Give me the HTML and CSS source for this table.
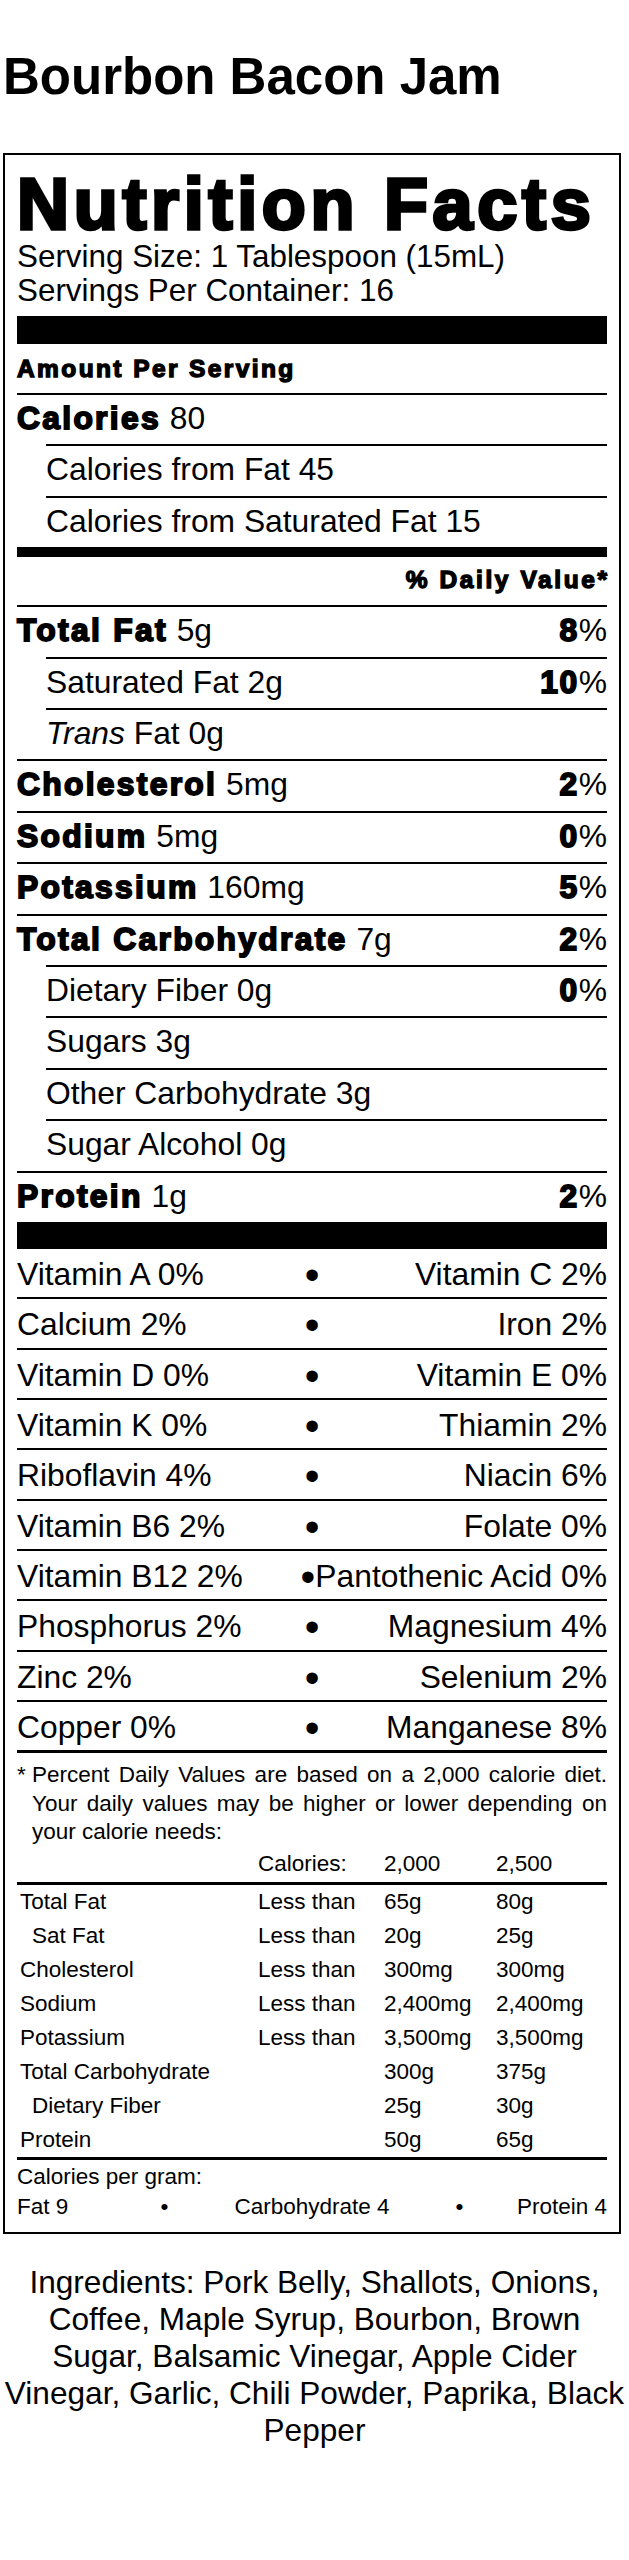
FILE: index.html
```html
<!DOCTYPE html>
<html lang="en">
<head>
<meta charset="utf-8">
<title>Bourbon Bacon Jam</title>
<link rel="stylesheet" href="styles.css">
</head>
<body>
<h1 class="title">Bourbon Bacon Jam</h1>

<section class="label">
  <h2 class="nf-title">Nutrition Facts</h2>
  <p class="serving">Serving Size: 1 Tablespoon (15mL)</p>
  <p class="serving">Servings Per Container: 16</p>
  <div class="bar bar-xl"></div>
  <div class="amount">Amount Per Serving</div>

  <div class="row"><span><b class="hv">Calories</b> 80</span></div>
  <div class="row sub"><span>Calories from Fat 45</span></div>
  <div class="row sub"><span>Calories from Saturated Fat 15</span></div>
  <div class="bar bar-md"></div>
  <div class="dv-head">% Daily Value*</div>

  <div class="row"><span><b class="hv">Total Fat</b> 5g</span><span class="pct"><b class="num">8</b>%</span></div>
  <div class="row sub"><span>Saturated Fat 2g</span><span class="pct"><b class="num">10</b>%</span></div>
  <div class="row sub"><span><i>Trans</i> Fat 0g</span></div>
  <div class="row"><span><b class="hv">Cholesterol</b> 5mg</span><span class="pct"><b class="num">2</b>%</span></div>
  <div class="row"><span><b class="hv">Sodium</b> 5mg</span><span class="pct"><b class="num">0</b>%</span></div>
  <div class="row"><span><b class="hv">Potassium</b> 160mg</span><span class="pct"><b class="num">5</b>%</span></div>
  <div class="row"><span><b class="hv">Total Carbohydrate</b> 7g</span><span class="pct"><b class="num">2</b>%</span></div>
  <div class="row sub"><span>Dietary Fiber 0g</span><span class="pct"><b class="num">0</b>%</span></div>
  <div class="row sub"><span>Sugars 3g</span></div>
  <div class="row sub"><span>Other Carbohydrate 3g</span></div>
  <div class="row sub"><span>Sugar Alcohol 0g</span></div>
  <div class="row"><span><b class="hv">Protein</b> 1g</span><span class="pct"><b class="num">2</b>%</span></div>
  <div class="bar bar-lg"></div>

  <div class="vit"><span>Vitamin A 0%</span><span class="dot">•</span><span class="vr">Vitamin C 2%</span></div>
  <div class="vit"><span>Calcium 2%</span><span class="dot">•</span><span class="vr">Iron 2%</span></div>
  <div class="vit"><span>Vitamin D 0%</span><span class="dot">•</span><span class="vr">Vitamin E 0%</span></div>
  <div class="vit"><span>Vitamin K 0%</span><span class="dot">•</span><span class="vr">Thiamin 2%</span></div>
  <div class="vit"><span>Riboflavin 4%</span><span class="dot">•</span><span class="vr">Niacin 6%</span></div>
  <div class="vit"><span>Vitamin B6 2%</span><span class="dot">•</span><span class="vr">Folate 0%</span></div>
  <div class="vit"><span>Vitamin B12 2%</span><span class="dot">•</span><span class="vr">Pantothenic Acid 0%</span></div>
  <div class="vit"><span>Phosphorus 2%</span><span class="dot">•</span><span class="vr">Magnesium 4%</span></div>
  <div class="vit"><span>Zinc 2%</span><span class="dot">•</span><span class="vr">Selenium 2%</span></div>
  <div class="vit vit-last"><span>Copper 0%</span><span class="dot">•</span><span class="vr">Manganese 8%</span></div>

  <div class="foot">
    <span class="ast">*</span>
    <p class="foot-text">Percent Daily Values are based on a 2,000 calorie diet. Your daily values may be higher or lower depending on your calorie needs:</p>
  </div>

  <div class="dvt-row dvt-head"><span></span><span>Calories:</span><span>2,000</span><span>2,500</span></div>
  <div class="dvt-row"><span>Total Fat</span><span>Less than</span><span>65g</span><span>80g</span></div>
  <div class="dvt-row"><span class="ind">Sat Fat</span><span>Less than</span><span>20g</span><span>25g</span></div>
  <div class="dvt-row"><span>Cholesterol</span><span>Less than</span><span>300mg</span><span>300mg</span></div>
  <div class="dvt-row"><span>Sodium</span><span>Less than</span><span>2,400mg</span><span>2,400mg</span></div>
  <div class="dvt-row"><span>Potassium</span><span>Less than</span><span>3,500mg</span><span>3,500mg</span></div>
  <div class="dvt-row"><span>Total Carbohydrate</span><span></span><span>300g</span><span>375g</span></div>
  <div class="dvt-row"><span class="ind">Dietary Fiber</span><span></span><span>25g</span><span>30g</span></div>
  <div class="dvt-row"><span>Protein</span><span></span><span>50g</span><span>65g</span></div>

  <div class="cpg">
    <div class="cpg-title">Calories per gram:</div>
    <div class="cpg-row">
      <span class="cpg-fat">Fat 9</span>
      <span class="cpg-b1">•</span>
      <span class="cpg-carb">Carbohydrate 4</span>
      <span class="cpg-b2">•</span>
      <span class="cpg-pro">Protein 4</span>
    </div>
  </div>
</section>

<p class="ingredients">Ingredients: Pork Belly, Shallots, Onions, Coffee, Maple Syrup, Bourbon, Brown Sugar, Balsamic Vinegar, Apple Cider Vinegar, Garlic, Chili Powder, Paprika, Black Pepper</p>
</body>
</html>
```

FILE: styles.css
```css
html, body {
  margin: 0;
  padding: 0;
  background: #fff;
  color: #000;
}

body {
  font-family: "Liberation Sans", Arial, Helvetica, sans-serif;
  width: 629px;
}

.title {
  margin: 47px 0 46px 3px;
  font-size: 51px;
  line-height: 60px;
  font-weight: 700;
}

.label {
  box-sizing: border-box;
  width: 618px;
  margin-left: 3px;
  border: 2px solid #000;
  padding: 14px 12px 10px;
  font-size: 31.8px;
}

.nf-title {
  margin: 0;
  font-size: 72px;
  line-height: 71px;
  font-weight: 700;
  letter-spacing: 4.7px;
  -webkit-text-stroke: 3.4px #000;
  white-space: nowrap;
}

.serving {
  margin: 0;
  font-size: 31.4px;
  line-height: 34px;
}

.bar { background: #000; }
.bar-xl { margin-top: 8px; height: 28px; }
.bar-md { height: 10px; }
.bar-lg { height: 27px; }

.amount {
  padding-top: 1px;
  font-size: 24.5px;
  line-height: 48px;
  font-weight: 700;
  letter-spacing: 2.4px;
  -webkit-text-stroke: 1.4px #000;
}

.hv {
  font-weight: 700;
  letter-spacing: 2.3px;
  -webkit-text-stroke: 1.8px #000;
}

.num {
  font-weight: 700;
  letter-spacing: 1.5px;
  -webkit-text-stroke: 1.8px #000;
}

.row {
  display: flex;
  justify-content: space-between;
  border-top: 2px solid #000;
  line-height: 47.4px;
  padding-bottom: 2px;
  white-space: nowrap;
}

.row.sub { margin-left: 29px; }

.dv-head {
  margin-right: -2.6px;
  text-align: right;
  font-size: 24.5px;
  line-height: 46px;
  padding-bottom: 2px;
  font-weight: 700;
  letter-spacing: 2.6px;
  -webkit-text-stroke: 1.4px #000;
}

.vit {
  display: grid;
  grid-template-columns: 1fr auto 1fr;
  padding-top: 3px;
  line-height: 45.33px;
  border-bottom: 2px solid #000;
  white-space: nowrap;
}

.vit-last { border-bottom-width: 3px; }

.vr { text-align: right; }

.dot {
  text-align: center;
  font-size: 42px;
}

.foot {
  display: flex;
  padding-top: 8px;
  font-size: 22.5px;
  line-height: 28.5px;
}

.ast {
  flex: none;
  width: 15px;
}

.foot-text {
  flex: 1;
  margin: 0;
  text-align: justify;
}

.dvt-row {
  display: grid;
  grid-template-columns: 241px 126px 112px 1fr;
  font-size: 22.5px;
  line-height: 34px;
  white-space: nowrap;
}

.dvt-row > span:first-child { padding-left: 3px; }
.dvt-row > span.ind { padding-left: 15px; }

.dvt-head {
  margin-top: 3.4px;
  line-height: 28.5px;
  padding-bottom: 3.6px;
  border-bottom: 3px solid #000;
}

.cpg {
  border-top: 3px solid #000;
  padding-top: 2px;
  font-size: 22.5px;
  line-height: 30px;
}

.cpg-row {
  display: grid;
  grid-template-columns: repeat(4, 1fr);
  white-space: nowrap;
}

.cpg-fat  { grid-row: 1; grid-column: 1; justify-self: start; }
.cpg-b1   { grid-row: 1; grid-column: 1 / 3; justify-self: center; }
.cpg-carb { grid-row: 1; grid-column: 2 / 4; justify-self: center; }
.cpg-b2   { grid-row: 1; grid-column: 3 / 5; justify-self: center; }
.cpg-pro  { grid-row: 1; grid-column: 4; justify-self: end; }

.ingredients {
  width: 629px;
  margin: 30px 0 0;
  text-align: center;
  font-size: 31.6px;
  line-height: 36.8px;
}
```
